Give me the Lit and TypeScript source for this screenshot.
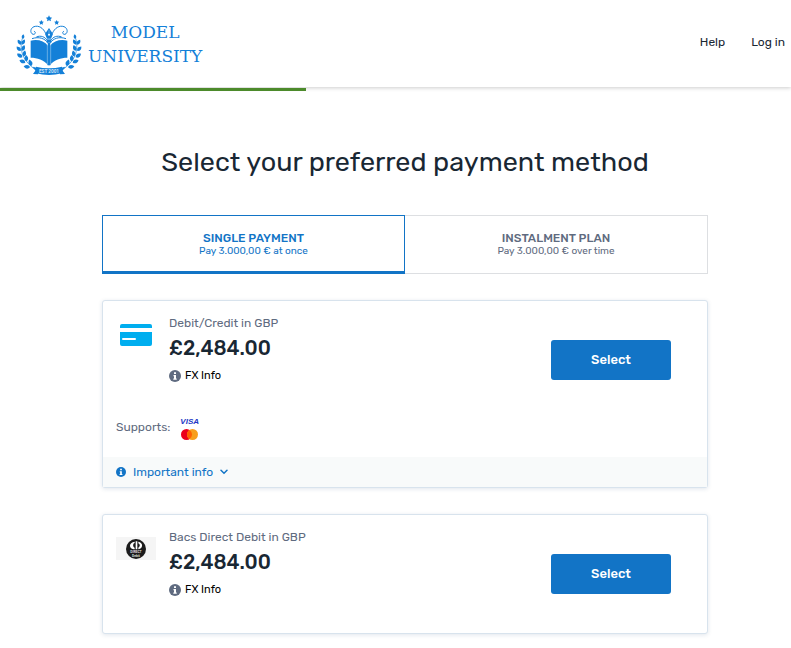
import { LitElement, html, svg, css } from "lit";
import { customElement, property, state } from "lit/decorators.js";
import { classMap } from "lit/directives/class-map.js";

const leafPath = "M0 0C-8 -4 -9 -12 -3 -19C5 -13 7 -6 0 0Z";

/* Leaves of the left laurel branch: x, y, rotation, scale */
const leaves: [number, number, number, number][] = [
  [38, 93, 18, 0.75],
  [33, 110, -24, 0.9],
  [36, 110, 38, 0.9],
  [32, 129, -32, 0.95],
  [36, 128, 34, 0.95],
  [37, 148, -46, 1],
  [41, 145, 22, 0.95],
  [46, 164, -58, 1],
  [49, 160, 8, 1],
  [60, 178, -72, 1],
  [64, 174, -8, 1.05],
];

const star = (x: number, y: number, r: number) => {
  const points = Array.from({ length: 10 }, (_, i) => {
    const radius = i % 2 ? r * 0.5 : r;
    const a = (Math.PI * i) / 5 - Math.PI / 2;
    return `${(x + radius * Math.cos(a)).toFixed(1)},${(y + radius * Math.sin(a)).toFixed(1)}`;
  });
  return svg`<polygon points=${points.join(" ")} />`;
};

const half = () => svg`
  ${leaves.map(([x, y, r, s]) => svg`<path d=${leafPath} transform="translate(${x} ${y}) rotate(${r}) scale(${s})" />`)}
  <path d="M37 91C29 120 33 152 72 182" fill="none" stroke="currentColor" stroke-width="2" />
  <path d="M107 76C100 60 86 51 72 56C61 60 59 75 69 79C76 80 79 72 73 70" fill="none" stroke="currentColor" stroke-width="3" stroke-linecap="round" />
  <path d="M62 98C83 93 103 99 114 113V171C101 156 82 149 62 149Z" />
  <path d="M66 92C86 85 105 91 113 105" fill="none" stroke="currentColor" stroke-width="3" />
  <path d="M79 87C92 81 106 87 111 97" fill="none" stroke="currentColor" stroke-width="3" />
`;

const crest = html`
  <svg class="crest" viewBox="0 0 234 216" aria-hidden="true">
    <g fill="currentColor">
      ${half()}
      <g transform="translate(234 0) scale(-1 1)">${half()}</g>
      <path d="M117 60L129 78L123 92H111L105 78Z" />
      <path d="M110 94H124V103H110Z" />
      <path d="M113 103H121V172H113Z" />
      ${star(117, 32, 10)} ${star(94, 44, 8)} ${star(140, 44, 8)}
      <path d="M68 176L84 180V199L69 198L76 188ZM166 176L150 180V199L165 198L158 188Z" />
      <path d="M78 176Q117 186 156 176V196Q117 206 78 196Z" />
    </g>
    <path d="M117 66V78M112 108V168M122 108V168" stroke="#fff" stroke-opacity="0.7" stroke-width="1.500" />
    <circle cx="117" cy="80" r="3" fill="#fff" />
    <text class="est" x="117" y="196" text-anchor="middle">EST 2001</text>
  </svg>
`;

const infoIcon = html`
  <svg class="info" viewBox="0 0 12 12" aria-hidden="true">
    <circle cx="6" cy="6" r="6" fill="currentColor" />
    <path d="M5 2.200H7V4H5ZM4.500 5H7V8.500H7.700V9.700H4.300V8.500H5V6.200H4.500Z" fill="#fff" />
  </svg>
`;

const cardIcon = html`
  <svg class="card-icon" viewBox="0 0 32 22" aria-hidden="true">
    <path d="M2 0H30Q32 0 32 2V4H0V2Q0 0 2 0ZM0 8H32V20Q32 22 30 22H2Q0 22 0 20Z" fill="#00aeef" />
    <rect x="2" y="14" width="14" height="2" rx="1" fill="#fff" />
  </svg>
`;

const debitIcon = html`
  <span class="debit">
    <svg viewBox="0 0 60 60" aria-hidden="true">
      <circle cx="30" cy="30" r="30" fill="#1b1b1b" />
      <path fill-rule="evenodd" d="M26 8V12C20 13 20 25 26 26V31H23C8 28 8 11 26 8ZM29 7H34V31H29ZM37 8C52 11 52 28 37 31V26C43 22 43 16 37 13Z" fill="#fff" />
      <g class="debit-text" text-anchor="middle">
        <text x="30" y="43">DIRECT</text>
        <text x="30" y="53">Debit</text>
      </g>
    </svg>
  </span>
`;

@customElement("payment-option")
class PaymentOption extends LitElement {
  @property() label = "";
  @property() amount = "";
  @property() kind = "card";
  @property({ type: Boolean }) supports = false;

  static styles = css`
    :host {
      display: block;
      border: 1px solid #d8e3ed;
      border-radius: 3px;
      box-shadow: 0 1px 4px rgba(40, 80, 120, 0.14);
      background: #fff;
    }
    .main {
      display: grid;
      grid-template-columns: 40px 1fr 120px;
      column-gap: 13px;
      align-items: start;
      min-height: 118px;
      box-sizing: border-box;
      padding: 0 36px 0 13px;
    }
    .main.short {
      min-height: 110px;
    }
    .pic {
      display: flex;
      justify-content: center;
      padding-top: 22px;
    }
    .card-icon {
      width: 32px;
      height: 22px;
      margin-top: 1px;
    }
    .debit {
      display: flex;
      justify-content: center;
      align-items: center;
      width: 40px;
      height: 23px;
      background: #f5f5f5;
    }
    .debit svg {
      width: 20px;
      height: 20px;
    }
    .debit-text {
      font: bold 10px "Roboto", sans-serif;
      fill: #ddd;
    }
    .text {
      padding-top: 14px;
    }
    h2 {
      margin: 0;
      font-size: 12px;
      line-height: 16px;
      font-weight: 400;
      color: #5f6b80;
    }
    .amount {
      margin: 0;
      font-size: 20px;
      line-height: 35px;
      font-weight: 500;
      color: #192733;
    }
    button {
      font: inherit;
      border: 0;
      background: none;
      padding: 0;
      cursor: pointer;
    }
    .fx {
      display: flex;
      align-items: center;
      gap: 4px;
      font-size: 11px;
      line-height: 20px;
      color: #000;
    }
    .fx .info {
      color: #5f6b80;
    }
    .info {
      width: 12px;
      height: 12px;
    }
    .select {
      height: 40px;
      margin-top: 39px;
      padding-bottom: 2px;
      border-radius: 3px;
      background: #1274c6;
      color: #fff;
      font-size: 13px;
      font-weight: 500;
    }
    .supports {
      display: flex;
      align-items: center;
      gap: 10px;
      height: 32px;
      padding: 0 13px 14px;
      font-size: 12px;
      color: #5f6b80;
    }
    .brands {
      display: flex;
      flex-direction: column;
      align-items: center;
      gap: 3px;
      padding-top: 4px;
    }
    .visa {
      font: italic bold 8px/8px "Liberation Sans", sans-serif;
      color: #2237c4;
    }
    .mc {
      width: 17px;
      height: 11px;
    }
    .important {
      display: flex;
      align-items: center;
      gap: 7px;
      width: 100%;
      height: 30px;
      padding: 0 13px;
      background: #f8fafa;
      color: #1274c6;
      font-size: 12px;
    }
    .important .info {
      width: 10px;
      height: 10px;
    }
    .chevron {
      width: 8px;
      height: 6px;
    }
  `;

  render() {
    return html`
      <div class=${classMap({ main: true, short: this.supports })}>
        <div class="pic">${this.kind === "card" ? cardIcon : debitIcon}</div>
        <div class="text">
          <h2>${this.label}</h2>
          <p class="amount">${this.amount}</p>
          <button class="fx">${infoIcon}FX Info</button>
        </div>
        <button class="select">Select</button>
      </div>
      ${this.supports
        ? html`
            <div class="supports">
              Supports:
              <span class="brands">
                <span class="visa">VISA</span>
                <svg class="mc" viewBox="0 0 17 11" role="img" aria-label="Mastercard">
                  <circle cx="5.500" cy="5.500" r="5.500" fill="#eb001b" />
                  <circle cx="11.500" cy="5.500" r="5.500" fill="#f79e1b" />
                  <path d="M8.500 0.900A5.500 5.500 0 0 1 8.500 10.100A5.500 5.500 0 0 1 8.500 0.900Z" fill="#ff5f00" />
                </svg>
              </span>
            </div>
            <button class="important">
              ${infoIcon}Important info
              <svg class="chevron" viewBox="0 0 8 6" aria-hidden="true">
                <path d="M1 1.200L4 4.200L7 1.200" fill="none" stroke="currentColor" stroke-width="1.500" stroke-linecap="round" />
              </svg>
            </button>
          `
        : ""}
    `;
  }
}

@customElement("app-root")
class AppRoot extends LitElement {
  @state() tab = 0;

  static styles = css`
    :host {
      display: block;
      font-family: "Rubik", "Inter", sans-serif;
      color: #192733;
      background: #fff;
    }
    header {
      display: flex;
      justify-content: space-between;
      align-items: center;
      height: 87px;
      padding: 0 6px 0 10px;
      box-shadow: 0 1px 4px rgba(0, 0, 0, 0.2);
    }
    .logo {
      display: flex;
      align-items: center;
      color: #1480d8;
      text-decoration: none;
    }
    .crest {
      width: 78px;
      height: 72px;
    }
    .est {
      font: bold 14px "Roboto", sans-serif;
      fill: #cfe5f8;
    }
    .name {
      font: 17px/24px "DejaVu Serif", serif;
      text-align: center;
    }
    nav {
      display: flex;
      gap: 26px;
      font-size: 12px;
      padding-bottom: 3px;
    }
    nav a {
      color: #192733;
      text-decoration: none;
    }
    .progress {
      position: relative;
      width: 306px;
      height: 3px;
      margin-top: 1px;
      background: #4c8a2b;
    }
    main {
      display: flex;
      flex-direction: column;
      gap: 26px;
      padding: 0 83px 14px 102px;
    }
    h1 {
      margin: 54px 0 10px;
      font-size: 27px;
      line-height: 34px;
      font-weight: 400;
      text-align: center;
      white-space: nowrap;
    }
    .tabs {
      display: grid;
      grid-template-columns: 1fr 1fr;
    }
    .tab {
      display: flex;
      flex-direction: column;
      align-items: center;
      height: 59px;
      padding: 15px 0 0;
      border: 1px solid #dddfe2;
      border-left-width: 0;
      background: #fff;
      color: #5f6b80;
      font-family: inherit;
      font-size: 10px;
      line-height: 13px;
      cursor: pointer;
    }
    .tab b {
      font-size: 12px;
      line-height: 14px;
      font-weight: 500;
    }
    .tab.on {
      border: 1px solid #1274c6;
      border-bottom-width: 3px;
      color: #1274c6;
    }
  `;

  render() {
    const tabs = [
      ["SINGLE PAYMENT", "Pay 3.000,00 € at once"],
      ["INSTALMENT PLAN", "Pay 3.000,00 € over time"],
    ];
    return html`
      <header>
        <a class="logo" href="#">${crest}<span class="name">MODEL<br />UNIVERSITY</span></a>
        <nav><a href="#help">Help</a><a href="#login">Log in</a></nav>
      </header>
      <div class="progress"></div>
      <main>
        <h1>Select your preferred payment method</h1>
        <div class="tabs" role="tablist">
          ${tabs.map(
            ([title, note], i) => html`
              <button
                role="tab"
                aria-selected=${this.tab === i}
                class=${classMap({ tab: true, on: this.tab === i })}
                @click=${() => (this.tab = i)}
              >
                <b>${title}</b><span>${note}</span>
              </button>
            `
          )}
        </div>
        <payment-option label="Debit/Credit in GBP" amount="£2,484.00" supports></payment-option>
        <payment-option label="Bacs Direct Debit in GBP" amount="£2,484.00" kind="debit"></payment-option>
      </main>
    `;
  }
}
